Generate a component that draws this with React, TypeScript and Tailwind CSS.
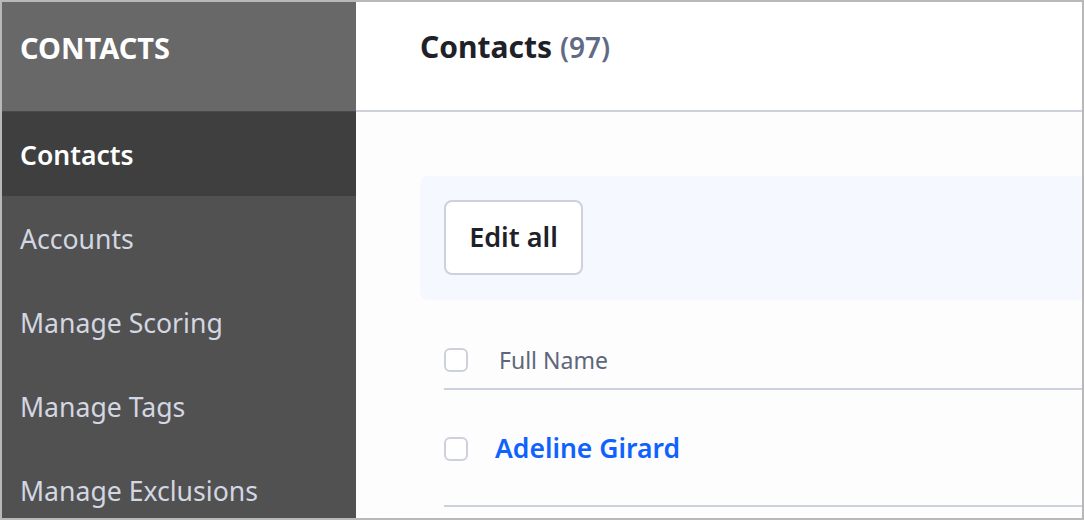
const navItems = ["Contacts", "Accounts", "Manage Scoring", "Manage Tags", "Manage Exclusions"];

const Checkbox = () => (
	<span className="block w-[24px] h-[24px] rounded-[6px] border-2 border-[#cdd1dd] bg-white shrink-0" />
);

const App = () => {
	return (
		<div
			className="w-[1084px] h-[520px] border-2 border-[#b8b8b8] flex overflow-hidden bg-[#fdfdfd]"
			style={{ fontFamily: '"Noto Sans", sans-serif' }}
		>
			<aside className="w-[354px] shrink-0 flex flex-col bg-[#515151] overflow-hidden">
				<div className="h-[110px] shrink-0 bg-[#686868] border-b border-[#4a4a4a] pl-[18px] pt-[26px]">
					<h1 className="text-[29px] leading-[40px] font-bold text-white">CONTACTS</h1>
				</div>
				{navItems.map((item, i) => (
					<div
						key={item}
						className={
							i === 0
								? "h-[84px] shrink-0 flex items-center pl-[18px] pt-[4px] bg-[#3f3f3f] text-white font-semibold text-[26.5px]"
								: "h-[84px] shrink-0 flex items-center pl-[18px] pt-[4px] text-[#d3d7e2] text-[26.6px]"
						}
					>
						{item}
					</div>
				))}
			</aside>
			<main className="flex-1 flex flex-col">
				<div className="h-[110px] shrink-0 border-b-2 border-[#cdd1dd] bg-white pl-[64px] flex items-center pb-[20px]">
					<h2 className="text-[30px] font-bold text-[#1e2127]">
						Contacts <span className="text-[#5f6b85] font-semibold text-[28px]">(97)</span>
					</h2>
				</div>
				<div className="pl-[64px] pt-[64px]">
					<div className="h-[124px] bg-[#f5f8ff] rounded-l-lg pl-[24px] pt-[24px]">
						<button className="w-[139px] h-[75px] rounded-lg border-2 border-[#cdd1dd] bg-white text-[27px] font-semibold text-[#1e2127]">
							Edit all
						</button>
					</div>
					<div className="ml-[24px]">
						<div className="mt-[34px] h-[56px] border-b-2 border-[#cdd1dd] flex items-center gap-[31px] pb-[2px]">
							<Checkbox />
							<span className="text-[23px] text-[#5d667a]">Full Name</span>
						</div>
						<div className="h-[117px] border-b-2 border-[#cdd1dd] flex items-center gap-[27px] pt-[2px]">
							<Checkbox />
							<a href="#" className="text-[26.5px] font-semibold text-[#0f62fe]">
								Adeline Girard
							</a>
						</div>
					</div>
				</div>
			</main>
		</div>
	);
};

export default App;
